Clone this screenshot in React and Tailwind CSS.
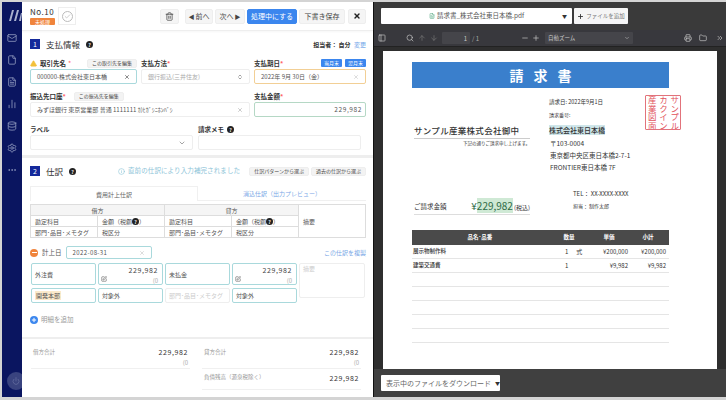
import React from "react";
import {
  AlertTriangle, ArrowDown, ArrowUp, ChartNoAxesColumn, Check, ChevronDown, ChevronsRight, ChevronsUpDown,
  Database, Ellipsis, File, FileText, Folder, Info, Mail, Minus, PanelLeft, Plus, Power, Printer, Search,
  Settings, SquarePen, Trash2, X,
} from "lucide-react";

const inputBase = "flex items-center bg-white rounded-[2px] border text-[6px] px-1.5 text-[#555] whitespace-nowrap";

const Help = () => (
  <span className="inline-flex w-[7px] h-[7px] rounded-full bg-[#222] text-white text-[5px] font-bold items-center justify-center leading-none">?</span>
);

const SmallBtn = ({ children }) => (
  <span className="px-1 h-[9px] flex items-center bg-[#f3f3f3] border border-[#eee] rounded-[2px] text-[5px] text-[#444] whitespace-nowrap">{children}</span>
);

const Label = ({ children, req }) => (
  <span className="text-[6.5px] font-bold text-[#333] leading-none whitespace-nowrap">
    {children}{req && <span className="text-red-400">*</span>}
  </span>
);

const SectionHead = ({ n, title }) => (
  <div className="flex items-center gap-1 whitespace-nowrap">
    <span className="w-[10px] h-[10px] bg-[#14299b] text-white text-[7px] flex items-center justify-center">{n}</span>
    <span className="text-[8.5px] text-[#333] ml-0.5">{title}</span>
    <span className="ml-0.5 flex"><Help /></span>
  </div>
);

const TopBtn = ({ children, className = "" }) => (
  <span className={`h-[15px] flex items-center justify-center rounded-[2px] bg-[#f5f5f5] border border-[#eee] text-[7px] text-[#444] whitespace-nowrap ${className}`}>{children}</span>
);

const Cell = ({ children, className = "" }) => (
  <div className={`border-r border-b border-[#ddd] flex items-center px-1 text-[6px] text-[#555] whitespace-nowrap ${className}`}>{children}</div>
);

const AmountCell = () => (
  <div className="h-[22px] border border-[#a9d9dc] rounded-[2px] bg-white relative px-1 flex flex-col items-end pt-[2px]">
    <span className="text-[7px] tracking-[0.6px] text-[#444] leading-[9px]">229,982</span>
    <span className="text-[6px] text-[#aaa] leading-[9px] mt-[1px]">(0</span>
    <SquarePen className="absolute left-[2px] bottom-[2px] w-[6px] h-[6px] text-[#444]" />
  </div>
);

const TagCell = ({ children, muted }) => (
  <div className={`h-[15px] rounded-[2px] border flex items-center px-[3px] text-[6px] whitespace-nowrap overflow-hidden ${muted ? "border-[#eee] text-[#ccc]" : "border-[#a9d9dc] text-[#555]"}`}>{children}</div>
);

const Side = () => (
  <div className="w-[20px] shrink-0 bg-[#0a1560] flex flex-col items-center text-[#8e97bd] relative overflow-hidden">
    <svg className="mt-[8px] ml-[6px]" width="14" height="11" viewBox="0 0 14 11">
      <path d="M4 0h2L3 11H1zM9 0h2L8 11H6zM13 3h1L13 11h-2z" fill="#a9b1cf" />
    </svg>
    <div className="flex flex-col items-center gap-[12px] mt-[12px]">
      <Mail className="w-[10px] h-[10px]" />
      <File className="w-[10px] h-[10px]" />
      <FileText className="w-[10px] h-[10px]" />
      <ChartNoAxesColumn className="w-[10px] h-[10px]" />
      <Database className="w-[10px] h-[10px]" />
      <Settings className="w-[10px] h-[10px]" />
      <Ellipsis className="w-[10px] h-[10px]" />
    </div>
    <div className="absolute left-[5px] bottom-[7px] w-[18px] h-[18px] rounded-full bg-[#39437f] flex items-center justify-center">
      <Power className="w-[8px] h-[8px] text-[#6b74a5]" />
    </div>
  </div>
);

const Header = () => (
  <div className="h-[29px] shrink-0 flex items-center pl-[8px] pr-[7px] border-b border-[#eee] shadow-[0_1px_2px_rgba(0,0,0,0.04)]">
    <div className="flex flex-col w-[25px]">
      <span className="text-[8px] tracking-[0.5px] text-[#333] leading-[10px]">No.10</span>
      <span className="bg-[#f0843c] text-white text-[5px] text-center leading-[7px] rounded-[1px] mt-[1px]">未処理</span>
    </div>
    <span className="ml-[3px] w-[18px] h-[18px] border border-[#eee] flex items-center justify-center">
      <span className="w-[11px] h-[11px] border border-[#bbb] rounded-full flex items-center justify-center">
        <Check className="w-[7px] h-[7px] text-[#aaa]" />
      </span>
    </span>
    <div className="ml-auto flex items-center">
      <TopBtn className="w-[19px]"><Trash2 className="w-[9px] h-[9px]" /></TopBtn>
      <TopBtn className="w-[28px] ml-[6px]"><span className="text-[6px] mr-px">◀</span>前へ</TopBtn>
      <TopBtn className="w-[30px] ml-[2px]">次へ<span className="text-[6px] ml-px">▶</span></TopBtn>
      <TopBtn className="w-[50px] ml-[2px] !bg-[#3b86ee] !border-[#3b86ee] !text-white">処理中にする</TopBtn>
      <TopBtn className="w-[46px] ml-[2px]">下書き保存</TopBtn>
      <TopBtn className="w-[18px] ml-[3px]"><X strokeWidth={4} className="w-[8px] h-[8px] text-[#222]" /></TopBtn>
    </div>
  </div>
);

const PaymentSection = () => (
  <div className="h-[127px] shrink-0 pl-[8px] pr-[7px] pt-[8px] border-b-[3px] border-[#eee]">
    <div className="flex items-center justify-between h-[10px]">
      <SectionHead n="1" title="支払情報" />
      <span className="text-[6px] font-bold text-[#333]">担当者： 自分 <span className="text-[#6ea2e8] font-normal ml-0.5">変更</span></span>
    </div>
    <div className="grid grid-cols-[107px_109px_112px] gap-x-[4px] mt-[9px]">
      <div>
        <div className="flex items-center h-[10px]">
          <AlertTriangle className="w-[7px] h-[7px] text-[#f3c13a] fill-[#f3c13a] mr-[3px]" />
          <Label>取引先名</Label><span className="text-red-400 text-[7px] ml-[2px]">*</span>
          <span className="ml-auto"><SmallBtn>この取引先を編集</SmallBtn></span>
        </div>
        <div className={`${inputBase} h-[15px] mt-[1px] border-[#a9d9dc] justify-between`}>
          000000-株式会社東日本橋<X strokeWidth={3} className="w-[6px] h-[6px] text-[#666]" />
        </div>
      </div>
      <div>
        <div className="h-[10px] flex items-center"><Label req>支払方法</Label></div>
        <div className={`${inputBase} h-[15px] mt-[1px] border-[#eee] justify-between !text-[#aaa]`}>
          銀行振込(三井住友)<ChevronsUpDown className="w-[6px] h-[6px] text-[#444]" />
        </div>
      </div>
      <div>
        <div className="flex items-center h-[10px]">
          <Label req>支払期日</Label>
          <span className="ml-auto flex gap-[3px]">
            <span className="px-[3px] h-[8px] flex items-center rounded-[1px] bg-[#3b86ee] text-white text-[5px]">当月末</span>
            <span className="px-[3px] h-[8px] flex items-center rounded-[1px] bg-[#3b86ee] text-white text-[5px]">翌月末</span>
          </span>
        </div>
        <div className={`${inputBase} h-[15px] mt-[1px] border-[#f2cf95] justify-between`}>
          2022年 9月 30日（金）<X className="w-[6px] h-[6px] text-[#bbb]" />
        </div>
      </div>
    </div>
    <div className="grid grid-cols-[220px_112px] gap-x-[4px] mt-[7px]">
      <div>
        <div className="flex items-center h-[10px] gap-[8px]">
          <Label req>振込先口座</Label><SmallBtn>この振込先を編集</SmallBtn>
        </div>
        <div className={`${inputBase} h-[15px] mt-[1px] border-[#eee] justify-between`}>
          みずほ銀行 東京営業部 普通 1111111 ｶ)ﾋｶﾞｼﾆﾎﾝﾊﾞｼ<X className="w-[6px] h-[6px] text-[#999]" />
        </div>
      </div>
      <div>
        <div className="h-[10px] flex items-center"><Label req>支払金額</Label></div>
        <div className={`${inputBase} h-[15px] mt-[1px] border-[#b5d8c5] justify-end !text-[6.5px] tracking-[0.6px] !px-[3px]`}>229,982</div>
      </div>
    </div>
    <div className="grid grid-cols-[163px_163px] gap-x-[5px] mt-[7px]">
      <div>
        <div className="h-[10px] flex items-center"><Label>ラベル</Label></div>
        <div className={`${inputBase} h-[15px] mt-[1px] border-[#eee] justify-end`}><ChevronDown className="w-[8px] h-[8px] text-[#777]" /></div>
      </div>
      <div>
        <div className="h-[10px] flex items-center gap-[3px]"><Label>請求メモ</Label><Help /></div>
        <div className={`${inputBase} h-[15px] mt-[1px] border-[#eee]`} />
      </div>
    </div>
  </div>
);

const JournalSection = () => (
  <div className="h-[181px] shrink-0 pl-[8px] pr-[7px] pt-[8px] border-b-2 border-[#eee]">
    <div className="flex items-center h-[10px]">
      <SectionHead n="2" title="仕訳" />
      <span className="ml-[42px] flex items-center text-[6.5px] text-[#8cc4d8] tracking-[0.1px] whitespace-nowrap">
        <Info className="w-[7px] h-[7px] mr-[3px]" />直前の仕訳により入力補完されました
      </span>
      <span className="ml-auto flex gap-[2px]">
        <SmallBtn>仕訳パターンから選ぶ</SmallBtn>
        <SmallBtn>過去の仕訳から選ぶ</SmallBtn>
      </span>
    </div>
    <div className="grid grid-cols-2 h-[15px] mt-[10px] text-[6px]">
      <div className="flex items-center justify-center border border-b-0 border-[#f0f0f0] text-[#666]">費用計上仕訳</div>
      <div className="flex items-center justify-center border-b border-[#f0f0f0] text-[#7aa7e6]">消込仕訳（出力プレビュー）</div>
    </div>
    <div className="grid grid-cols-[67px_67px_67px_67px_1fr] grid-rows-[11px_11px_11px] border-t border-l border-[#ddd] mt-[3px]">
      <Cell className="col-span-2 justify-center bg-[#f5f5f5]">借方</Cell>
      <Cell className="col-span-2 justify-center bg-[#f5f5f5]">貸方</Cell>
      <Cell className="row-span-3">摘要</Cell>
      <Cell>勘定科目</Cell>
      <Cell>金額（税額<Help />）</Cell>
      <Cell>勘定科目</Cell>
      <Cell>金額（税額<Help />）</Cell>
      <Cell>部門･品目･メモタグ</Cell>
      <Cell>税区分</Cell>
      <Cell>部門･品目･メモタグ</Cell>
      <Cell>税区分</Cell>
    </div>
    <div className="flex items-center mt-[8px] h-[13px]">
      <span className="w-[8px] h-[8px] rounded-full bg-[#f0843c] flex items-center justify-center"><span className="w-[5px] h-px bg-white" /></span>
      <span className="text-[6.5px] text-[#555] ml-[4px] whitespace-nowrap">計上日</span>
      <div className={`${inputBase} w-[86px] h-[13px] ml-[4px] border-[#a9d9dc] justify-between tracking-[0.4px]`}>
        2022-08-31<X className="w-[6px] h-[6px] text-[#bbb]" />
      </div>
      <span className="ml-auto text-[6px] text-[#7aa7e6]">この仕訳を複製</span>
    </div>
    <div className="grid grid-cols-[65px_65px_65px_65px_66px] gap-x-[2px] mt-[4px] pl-px">
      <div className="flex flex-col gap-[3px]">
        <div className="h-[22px] border border-[#a9d9dc] rounded-[2px] flex items-center px-[3px] text-[6px] text-[#555]">外注費</div>
        <TagCell><span className="bg-[#fbeacb] px-px">開発本部</span></TagCell>
      </div>
      <div className="flex flex-col gap-[3px]"><AmountCell /><TagCell>対象外</TagCell></div>
      <div className="flex flex-col gap-[3px]">
        <div className="h-[22px] border border-[#a9d9dc] rounded-[2px] flex items-center px-[3px] text-[6px] text-[#555]">未払金</div>
        <TagCell muted>部門･品目･メモタグ</TagCell>
      </div>
      <div className="flex flex-col gap-[3px]"><AmountCell /><TagCell>対象外</TagCell></div>
      <div className="h-[35px] border border-[#eee] rounded-[2px] px-[3px] text-[6px] text-[#ccc]">摘要</div>
    </div>
    <div className="flex items-center mt-[12px]">
      <span className="w-[8px] h-[8px] rounded-full bg-[#3b86ee] flex items-center justify-center"><Plus strokeWidth={4} className="w-[6px] h-[6px] text-white" /></span>
      <span className="text-[6.5px] text-[#999] ml-[3px]">明細を追加</span>
    </div>
  </div>
);

const TotalRow = ({ label, sub }) => (
  <div className="flex justify-between border-b border-[#f0f0f0] px-[2px] h-[24px]">
    <span className="text-[5.5px] text-[#999] pt-[3px]">{label}</span>
    <span className="flex flex-col items-end">
      <span className="text-[7px] tracking-[0.6px] text-[#333] leading-[9px] mt-[3px]">229,982</span>
      {sub && <span className="text-[6px] text-[#aaa] leading-[9px] mt-[1px]">(0</span>}
    </span>
  </div>
);

const Totals = () => (
  <div className="flex-1 grid grid-cols-2 gap-x-[12px] pl-[9px] pr-[12px] pt-[6px] bg-white">
    <div><TotalRow label="借方合計" sub /></div>
    <div>
      <TotalRow label="貸方合計" sub />
      <div className="flex justify-between px-[2px] mt-[4px] border-b border-[#f0f0f0] h-[17px]">
        <span className="text-[5.5px] text-[#999]">負債残高（源泉税除く）</span>
        <span className="text-[7px] tracking-[0.6px] text-[#333]">229,982</span>
      </div>
    </div>
  </div>
);

const Viewer = () => (
  <div className="h-[28px] shrink-0 bg-[#3a3a3a] flex items-center pl-[7px] gap-[2px]">
    <div className="w-[191px] h-[16px] bg-white rounded-[1px] flex items-center justify-center relative text-[6.5px] text-[#555]">
      <FileText className="w-[6px] h-[6px] text-[#4aa37b] mr-[2px]" />請求書_株式会社東日本橋.pdf
      <span className="absolute right-[5px] text-[5px] text-[#333]">▼</span>
    </div>
    <div className="w-[54px] h-[16px] bg-[#f5f5f5] rounded-[1px] flex items-center justify-center text-[5.5px] text-[#777]">
      <Plus strokeWidth={3} className="w-[7px] h-[7px] text-[#333] mr-[2px]" />ファイルを追加
    </div>
  </div>
);

const PdfToolbar = () => (
  <div className="h-[17px] shrink-0 bg-[#38383d] border-b border-[#222] flex items-center text-[#c8c8c8] pl-[4px] pr-[2px]">
    <PanelLeft className="w-[8px] h-[8px]" />
    <Search className="w-[8px] h-[8px] ml-[20px]" />
    <ArrowUp className="w-[8px] h-[8px] ml-[4px] text-[#777]" />
    <ArrowDown className="w-[8px] h-[8px] ml-[4px] text-[#777]" />
    <span className="w-[28px] h-[12px] bg-[#45454a] ml-[4px] rounded-[1px] text-[6px] flex items-center justify-end pr-[3px]">1</span>
    <span className="text-[6px] ml-[2px] text-[#aaa]">/ 1</span>
    <Minus className="w-[8px] h-[8px] ml-[42px]" />
    <Plus className="w-[8px] h-[8px] ml-[3px]" />
    <span className="w-[88px] h-[12px] bg-[#45454a] ml-[5px] rounded-[1px] text-[5.5px] flex items-center justify-between px-[3px]">自動ズーム<ChevronDown className="w-[6px] h-[6px]" /></span>
    <Printer className="w-[8px] h-[8px] ml-auto" />
    <Folder className="w-[8px] h-[8px] ml-[7px]" />
    <ChevronsRight className="w-[8px] h-[8px] ml-[9px]" />
  </div>
);

const Stamp = () => (
  <div className="w-[36px] h-[35px] border border-[#e2737b] rounded-[1px] flex flex-row-reverse justify-around items-center text-[#e2535d] text-[8.5px] leading-[11px] overflow-hidden">
    <span className="[writing-mode:vertical-rl] whitespace-nowrap">サンプル</span>
    <span className="[writing-mode:vertical-rl] whitespace-nowrap">カクイン</span>
    <span className="[writing-mode:vertical-rl] whitespace-nowrap">産業図面</span>
  </div>
);

const rows = [
  ["展示物制作料", "1", "式", "¥200,000", "¥200,000"],
  ["建築交通費", "1", "", "¥9,982", "¥9,982"],
  ["", "", "", "", ""], ["", "", "", "", ""], ["", "", "", "", ""], ["", "", "", "", ""], ["", "", "", "", ""],
];

const PdfPage = () => (
  <div className="mx-[9px] mt-[4px] bg-white flex-1 pl-[29px] pr-[48px] pt-[11px] text-[#333] overflow-hidden">
    <div className="h-[26px] bg-[#3a7fcc] text-white text-[14px] font-bold flex items-center justify-center tracking-[10px] pl-[10px]">請求書</div>
    <div className="grid grid-cols-[137px_1fr] mt-[9px] h-[133px]">
      <div className="pt-[27px]">
        <div className="text-[8.5px] font-medium border-b border-[#ccc] pb-[1px] tracking-[0.3px] w-[116px] ml-[2px] whitespace-nowrap">サンプル産業株式会社御中</div>
        <div className="text-[4.5px] text-right w-[118px] mt-[1px]">下記の通りご請求申し上げます。</div>
        <div className="flex items-end w-[116px] ml-[2px] mt-[53px] border-b border-[#ddd] pb-[2px] whitespace-nowrap">
          <span className="text-[6.5px]">ご請求金額</span>
          <span className="ml-auto text-[10px] leading-[12px] text-[#2e6b46]">¥<span className="bg-[#cfe9d5]">229,982</span></span>
          <span className="text-[6px] ml-[1px]">(税込)</span>
        </div>
      </div>
      <div className="relative">
        <div className="pt-[1px]">
          <div className="text-[5.5px] whitespace-nowrap">請求日: 2022年9月1日</div>
          <div className="text-[5px] mt-[5px]">請求番号:</div>
          <div className="text-[7px] font-medium mt-[6px] bg-[#cfe6ea] w-fit whitespace-nowrap">株式会社東日本橋</div>
          <div className="text-[6.5px] mt-[2px] ml-[1px] leading-[12px] whitespace-nowrap">〒103-0004<br />東京都中央区東日本橋2-7-1<br />FRONTIER東日本橋 7F</div>
          <div className="text-[6px] mt-[16px] ml-[24px] whitespace-nowrap">TEL： XX-XXXX-XXXX</div>
          <div className="text-[5px] mt-[4px] ml-[24px] whitespace-nowrap">担当： 制作太郎</div>
        </div>
        <div className="absolute right-[-12px] top-[-2px]"><Stamp /></div>
      </div>
    </div>
    <div className="grid grid-cols-[136px_42px_38px_40px] h-[15px] bg-[#4a4a4a] text-white text-[5.5px] font-bold items-center text-center">
      <span>品名･品番</span><span>数量</span><span>単価</span><span>小計</span>
    </div>
    {rows.map((r, i) => (
      <div key={i} className="grid grid-cols-[136px_42px_38px_40px] h-[14px] border-b border-[#e5e5e5] text-[6px] items-center">
        <span className="font-medium pl-px text-[5.5px]">{r[0]}</span>
        <span className="flex gap-[8px] pl-[17px]"><span>{r[1]}</span><span>{r[2]}</span></span>
        <span className="text-right whitespace-nowrap">{r[3]}</span>
        <span className="text-right pr-[2px]">{r[4]}</span>
      </div>
    ))}
  </div>
);

const App = () => (
  <div className="w-[726px] h-[400px] bg-[#d4d4d4] pt-[2px] pb-[3px] pl-[2px] flex overflow-hidden font-['Noto_Sans_CJK_JP','Noto_Sans',sans-serif]">
    <Side />
    <div className="w-[351px] shrink-0 bg-white flex flex-col">
      <Header />
      <PaymentSection />
      <JournalSection />
      <Totals />
    </div>
    <div className="w-[1px] shrink-0 bg-[#111]" />
    <div className="flex-1 bg-[#2e2e2e] flex flex-col min-w-0">
      <Viewer />
      <PdfToolbar />
      <PdfPage />
      <div className="h-[28px] shrink-0 bg-[#404040] flex items-center pl-[7px]">
        <div className="w-[119px] h-[16px] bg-white rounded-[1px] flex items-center pl-[5px] text-[7px] text-[#666] whitespace-nowrap">
          表示中のファイルをダウンロード<span className="text-[5px] ml-[4px] text-[#333]">▼</span>
        </div>
      </div>
    </div>
  </div>
);

export default App;
